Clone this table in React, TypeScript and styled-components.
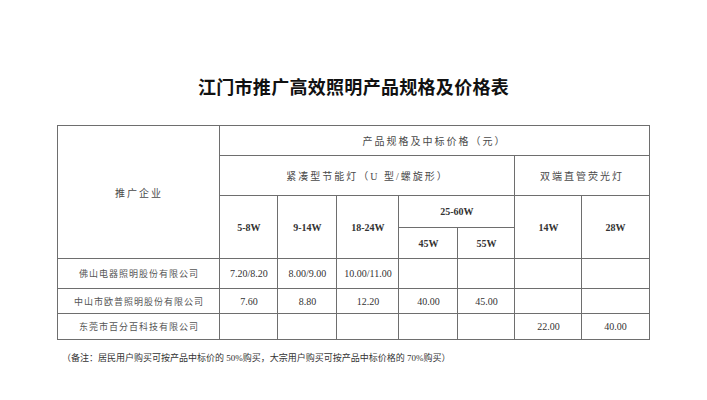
import React from 'react'
import styled, { createGlobalStyle } from 'styled-components'

const GlobalStyle = createGlobalStyle`
    html, body {
        margin: 0;
        padding: 0;
        background: #ffffff;
    }
`

const cjk = `"Liberation Serif", "Noto Sans CJK SC", serif`

const cols = [162, 58, 59, 62, 59, 57, 67, 67]

const rows = [
    { name: '佛山电器照明股份有限公司', values: ['7.20/8.20', '8.00/9.00', '10.00/11.00', '', '', '', ''], height: 30 },
    { name: '中山市欧普照明股份有限公司', values: ['7.60', '8.80', '12.20', '40.00', '45.00', '', ''], height: 25 },
    { name: '东莞市百分百科技有限公司', values: ['', '', '', '', '', '22.00', '40.00'], height: 26 },
]

export default function App() {
    return (
        <Page>
            <GlobalStyle />
            <Title>江门市推广高效照明产品规格及价格表</Title>
            <Table>
                <colgroup>
                    {cols.map((w, i) => (
                        <col key={i} style={{ width: w }} />
                    ))}
                </colgroup>
                <tbody>
                    <Row $h={30}>
                        <HeadCell rowSpan={4}>推广企业</HeadCell>
                        <HeadCell colSpan={7}>产品规格及中标价格（元）</HeadCell>
                    </Row>
                    <Row $h={40}>
                        <HeadCell colSpan={5}>紧凑型节能灯（U 型/螺旋形）</HeadCell>
                        <HeadCell colSpan={2}>双端直管荧光灯</HeadCell>
                    </Row>
                    <Row $h={32}>
                        <SpecCell rowSpan={2}>5-8W</SpecCell>
                        <SpecCell rowSpan={2}>9-14W</SpecCell>
                        <SpecCell rowSpan={2}>18-24W</SpecCell>
                        <SpecCell colSpan={2}>25-60W</SpecCell>
                        <SpecCell rowSpan={2}>14W</SpecCell>
                        <SpecCell rowSpan={2}>28W</SpecCell>
                    </Row>
                    <Row $h={31}>
                        <SpecCell>45W</SpecCell>
                        <SpecCell>55W</SpecCell>
                    </Row>
                    {rows.map((r) => (
                        <Row key={r.name} $h={r.height}>
                            <NameCell>{r.name}</NameCell>
                            {r.values.map((v, i) => (
                                <ValueCell key={i}>{v}</ValueCell>
                            ))}
                        </Row>
                    ))}
                </tbody>
            </Table>
            <Note>（备注：居民用户购买可按产品中标价的 50%购买，大宗用户购买可按产品中标价格的 70%购买）</Note>
        </Page>
    )
}

const Page = styled.div`
    width: 707px;
    height: 400px;
    display: flex;
    flex-direction: column;
    align-items: center;
    padding-top: 76px;
    box-sizing: border-box;
`

const Title = styled.div`
    font-family: ${cjk};
    font-weight: 700;
    font-size: 18px;
    line-height: 24px;
    letter-spacing: 0.3px;
    color: #111;
    margin-bottom: 25px;
`

const Table = styled.table`
    width: 591px;
    table-layout: fixed;
    border-collapse: collapse;
    border: 1px solid #6e6e6e;
`

const Row = styled.tr<{ $h: number }>`
    height: ${(p) => p.$h}px;
`

const Cell = styled.td`
    border: 1px solid #6e6e6e;
    padding: 0;
    text-align: center;
    vertical-align: middle;
    color: #4a4a4a;
`

const HeadCell = styled(Cell)`
    font-family: ${cjk};
    font-size: 10px;
    letter-spacing: 2px;
`

const SpecCell = styled(Cell)`
    font-family: "Liberation Serif", serif;
    font-weight: 700;
    font-size: 10px;
    color: #333;
`

const NameCell = styled(Cell)`
    font-family: ${cjk};
    font-size: 9px;
    letter-spacing: 1px;
    color: #555;
`

const ValueCell = styled(Cell)`
    font-family: "Liberation Serif", serif;
    font-size: 10px;
    color: #333;
`

const Note = styled.div`
    align-self: flex-start;
    margin-left: 62px;
    margin-top: 12px;
    font-family: ${cjk};
    font-size: 9px;
    line-height: 12px;
    color: #333;
`
